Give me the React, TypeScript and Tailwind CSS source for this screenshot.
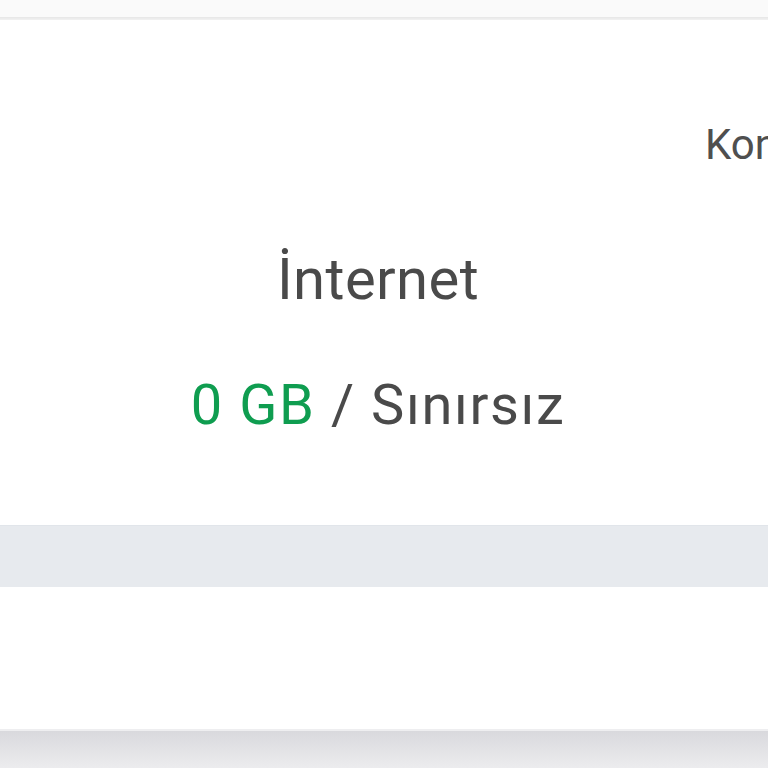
export default function App() {
  return (
    <div
      className="w-[768px] h-[768px] overflow-hidden bg-[#f9f9f9] flex flex-col"
      style={{ fontFamily: 'Roboto, "Noto Sans", sans-serif' }}
    >
      {/* top strip */}
      <div className="h-[17px] shrink-0 bg-[#fafafa]" />
      <div className="h-[3px] shrink-0 bg-gradient-to-b from-[#e6e6e6] to-[#f2f2f2]" />

      {/* usage card */}
      <div className="h-[505px] shrink-0 bg-white relative overflow-hidden">
        {/* next slide title, cut off at the right edge */}
        <span className="absolute left-[705px] top-[104px] whitespace-nowrap text-[42px] leading-none text-[#4f4f4f]">
          Konuşma
        </span>
        <div className="flex flex-col items-center w-[756px] pt-[230px]">
          <div className="text-[58px] leading-none text-[#4a4a4a] tracking-[0.4px]">İnternet</div>
          <div className="mt-[69px] text-[56px] leading-none text-[#4a4a4a] whitespace-nowrap tracking-[1.6px]">
            <span className="text-[#0f9d50]">0 GB</span> / Sınırsız
          </div>
        </div>
      </div>

      {/* separator band */}
      <div className="h-[62px] shrink-0 bg-[#e7eaee] border-t border-[#e1e5ea]" />

      {/* lower card */}
      <div className="h-[142px] shrink-0 bg-white" />

      {/* bottom shadow */}
      <div className="flex-1 bg-gradient-to-b from-[#d9d9dd] to-[#ececee] border-t-2 border-[#eeeef0]" />
    </div>
  );
}
